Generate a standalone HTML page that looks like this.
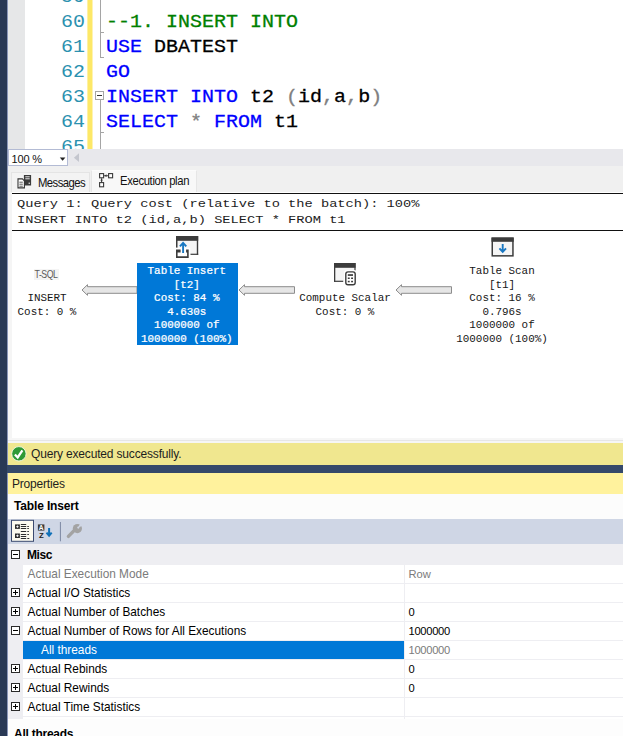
<!DOCTYPE html>
<html><head><meta charset="utf-8"><title>SSMS</title>
<style>
html,body{margin:0;padding:0;}
body{width:623px;height:736px;position:relative;overflow:hidden;background:#fff;font-family:"Liberation Sans",sans-serif;}
.abs{position:absolute;}
#leftbar{left:0;top:0;width:7px;height:736px;background:#293955;border-right:1px solid #8a96b8;}
/* editor */
#editor{left:8px;top:0;width:615px;height:149px;background:#fff;overflow:hidden;}
#margin{left:0;top:0;width:17px;height:149px;background:#e6e7e8;}
#chg{left:79.2px;top:0;width:5.3px;height:149px;background:#fde867;}
.ln,.cl{position:absolute;font-family:"Liberation Mono",monospace;font-size:20px;line-height:25px;height:25px;white-space:pre;transform:scaleY(0.94);transform-origin:0 17.84px;}
.ln{left:40.6px;width:36.5px;text-align:right;color:#2b91af;}
.cl{left:98px;color:#000;-webkit-text-stroke:0.3px;}
.k{color:#0000ff;}.c{color:#008000;}.g{color:#808080;}
.ol{position:absolute;background:#a5a5a5;}
/* strips */
#scroll{left:8px;top:149px;width:615px;height:17px;background:#e8e8ec;}
#zoom{left:8px;top:149px;width:58px;height:15px;background:#fff;border:1px solid #b3bbd4;}
#tabs{left:8px;top:166px;width:615px;height:26px;background:#f0f0f0;}
.tab{position:absolute;font-size:11.3px;color:#111;white-space:nowrap;}
/* plan */
#plan{left:8px;top:192px;width:615px;height:247px;background:#fff;}
.mono{font-family:"Liberation Mono",monospace;white-space:pre;}
.hdr{position:absolute;left:9px;font-size:13.7px;line-height:17px;color:#1c1c1c;transform:scaleY(0.86);transform-origin:0 13.2px;}
.node{position:absolute;top:0;height:0;font-size:10.9px;line-height:13.5px;text-align:center;color:#161616;}
.node span{position:absolute;left:0;width:100%;height:13.5px;transform:scaleY(0.94);transform-origin:50% 9.66px;}
/* status */
#status{left:8px;top:443px;width:615px;height:22px;background:#f0e78f;}
#sep{left:7px;top:465.2px;width:616px;height:7.4px;background:#35496a;}
#ptitle{left:8px;top:473px;width:615px;height:20.5px;background:#fff29d;}
#pobj{left:8px;top:493.5px;width:615px;height:25.5px;background:#fcfcfc;}
#ptool{left:8px;top:519px;width:615px;height:24.5px;background:#cfd6e5;}
#grid{left:8px;top:543.5px;width:615px;height:175px;background:#eeeef2;}
.row{position:absolute;left:15px;width:600px;height:18px;background:#fff;}
.row .n{position:absolute;left:4.6px;top:0;line-height:18px;font-size:11.85px;color:#000;white-space:nowrap;}
.row .v{position:absolute;left:385.5px;top:0;line-height:18px;font-size:11.2px;color:#000;white-space:nowrap;}
.row .d{position:absolute;left:381px;top:0;width:1px;height:19px;background:#eeeef2;}
.pm{position:absolute;left:3px;width:7px;height:7px;border:1px solid #2a2a2a;background:#fff;}
.pm i{position:absolute;left:1px;top:3px;width:5px;height:1px;background:#000;}
.pm b{position:absolute;left:3px;top:1px;width:1px;height:5px;background:#000;}
#desc{left:8px;top:719px;width:615px;height:17px;background:#fdfdfd;}
</style></head><body>
<div id="leftbar" class="abs"></div>

<div id="editor" class="abs">
  <div id="margin" class="abs"></div>
  <svg class="abs" style="left:79px;top:0" width="7" height="149" viewBox="0 0 7 149"><rect x="0.4" y="0" width="5.1" height="149" fill="#fde867"/></svg>
  <div class="ln" style="top:-16px">59</div>
  <div class="ln" style="top:9px">60</div>
  <div class="ln" style="top:34px">61</div>
  <div class="ln" style="top:59px">62</div>
  <div class="ln" style="top:84px">63</div>
  <div class="ln" style="top:109px">64</div>
  <div class="ln" style="top:134px">65</div>
  <div class="cl c" style="top:9px">--1. INSERT INTO</div>
  <div class="cl" style="top:34px"><span class="k">USE</span> DBATEST</div>
  <div class="cl" style="top:59px"><span class="k">GO</span></div>
  <div class="cl" style="top:84px"><span class="k">INSERT INTO</span> t2 <span class="g">(</span>id<span class="g">,</span>a<span class="g">,</span>b<span class="g">)</span></div>
  <div class="cl" style="top:109px"><span class="k">SELECT</span> <span class="g">*</span> <span class="k">FROM</span> t1</div>
  <!-- outlining -->
  <div class="ol" style="left:92px;top:0;width:1px;height:58px"></div>
  <div class="ol" style="left:92px;top:32px;width:4px;height:1px"></div>
  <div class="ol" style="left:92px;top:57px;width:4px;height:1px"></div>
  <div class="ol" style="left:92px;top:100px;width:1px;height:49px"></div>
  <div class="ol" style="left:92px;top:132px;width:4px;height:1px"></div>
  <div class="abs" style="left:87px;top:91px;width:7px;height:7px;border:1px solid #a5a5a5;background:#fff"><div class="abs" style="left:1px;top:3px;width:5px;height:1px;background:#333"></div></div>
</div>

<div id="scroll" class="abs"></div>
<div id="zoom" class="abs"><span class="abs" style="left:2.5px;top:1.5px;font-size:11px;line-height:14px;color:#111;white-space:nowrap;letter-spacing:-0.15px">100 %</span>
  <svg class="abs" style="left:50px;top:7px" width="8" height="5" viewBox="0 0 8 5"><path d="M0.8 0.5h5.6l-2.8 3.3z" fill="#222"/></svg></div>
<svg class="abs" style="left:73px;top:153px" width="7" height="10" viewBox="0 0 7 10"><path d="M6 0.3v8.8L0.9 4.7z" fill="#c4c6ce"/></svg>

<div id="tabs" class="abs">
  <div class="abs" style="left:3px;top:6px;width:79px;height:20px;background:#f3f3f3;border:1px solid #e4e4e4;border-bottom:none;box-sizing:border-box"></div>
  <div class="abs" style="left:82.5px;top:4px;width:106.5px;height:21.5px;background:#f8f8f8;border:1px solid #e6e6e6;border-top-color:#fbfbfb;border-bottom:none;box-sizing:border-box"></div>
  <svg class="abs" style="left:9px;top:8px" width="16" height="16" viewBox="0 0 16 16">
    <rect x="6.9" y="1" width="7.2" height="10.5" fill="#3a3a3a"/>
    <path d="M8.3 2.8h4.4M8.3 4.8h4.4" stroke="#e8e8e8" stroke-width="1"/>
    <rect x="11.6" y="8.6" width="1.3" height="1.3" fill="#e8e8e8"/>
    <path d="M1 4.9h4.4l2 2v7H1z" fill="#fff" stroke="#333" stroke-width="1.1"/>
    <path d="M2.4 8.2h3.4M2.4 10.2h3.4M2.4 12.2h3.4" stroke="#444" stroke-width="0.9"/>
  </svg>
  <span class="tab" style="left:30px;top:9.6px;line-height:14px;font-size:12.4px;letter-spacing:-0.6px;transform:scaleX(0.91);transform-origin:0 0">Messages</span>
  <svg class="abs" style="left:91px;top:7px" width="15" height="15" viewBox="0 0 15 15">
    <rect x="0.6" y="0.6" width="4" height="4.2" fill="#fff" stroke="#3a3a3a" stroke-width="1.1"/>
    <rect x="9.6" y="0.6" width="4" height="4.2" fill="#fff" stroke="#3a3a3a" stroke-width="1.1"/>
    <rect x="0.6" y="9.6" width="4" height="4.2" fill="#fff" stroke="#3a3a3a" stroke-width="1.1"/>
    <path d="M2.6 5.3v3.8M5.1 2.7h4" stroke="#3a3a3a" stroke-width="1.1"/>
    <path d="M5.6 2.7l1.9-1.4v2.8z M2.6 5.8l-1.3 1.7h2.6z" fill="#3a3a3a"/>
  </svg>
  <span class="tab" style="left:111.7px;top:7.6px;line-height:14px;font-size:12.4px;letter-spacing:-0.38px;transform:scaleX(0.91);transform-origin:0 0">Execution plan</span>
</div>

<div id="plan" class="abs">
  <div class="abs" style="left:0;top:0;width:4px;height:247px;background:#f5f5f5"></div>
  <div class="abs" style="left:4px;top:0.8px;width:611px;height:1.25px;background:#111"></div>
  <div class="abs" style="left:4px;top:37.8px;width:611px;height:1.25px;background:#111"></div>
  <div class="hdr mono" style="top:2.5px">Query 1: Query cost (relative to the batch): 100%</div>
  <div class="hdr mono" style="top:19.3px">INSERT INTO t2 (id,a,b) SELECT * FROM t1</div>

  <!-- T-SQL node -->
  <div class="abs" style="left:26px;top:76.7px;width:25px;height:11.3px;background:#f4f4f4"></div>
  <div class="abs" style="left:17.8px;top:76px;width:40px;text-align:center;font-size:10.7px;line-height:13px;color:#5a5a5a;letter-spacing:-0.6px;white-space:nowrap;transform:scaleX(0.82);transform-origin:50% 50%">T-SQL</div>
  <div class="node mono" style="left:-1px;width:80px"><span style="top:100.14px">INSERT</span><span style="top:114.14px">Cost: 0 %</span></div>

  <!-- arrows -->
  <svg class="abs" style="left:72px;top:90px" width="60" height="16" viewBox="0 0 60 16"><path d="M2 8L7.5 2.7V4.7H57V11.3H7.5V13.3Z" fill="#e6e6e6" stroke="#8c8c8c" stroke-width="1"/></svg>
  <svg class="abs" style="left:229px;top:90px" width="60" height="16" viewBox="0 0 60 16"><path d="M2 8L7.5 2.7V4.7H57.5V11.3H7.5V13.3Z" fill="#e6e6e6" stroke="#8c8c8c" stroke-width="1"/></svg>
  <svg class="abs" style="left:386px;top:90px" width="60" height="16" viewBox="0 0 60 16"><path d="M2 8L7.5 2.7V4.7H57.5V11.3H7.5V13.3Z" fill="#e6e6e6" stroke="#8c8c8c" stroke-width="1"/></svg>

  <!-- Table Insert -->
  <svg class="abs" style="left:168.1px;top:43.9px" width="24" height="23" viewBox="0 0 24 23">
    <rect x="0.5" y="0.5" width="21.2" height="17.9" fill="#f5f5f5"/>
    <rect x="0" y="0" width="22.2" height="4.8" fill="#3c3c3c"/>
    <rect x="0" y="0" width="1.5" height="12" fill="#3c3c3c"/>
    <rect x="20.8" y="0" width="1.4" height="18.9" fill="#3c3c3c"/>
    <rect x="14.4" y="17.7" width="7.8" height="1.2" fill="#3c3c3c"/>
    <rect x="-1" y="11.6" width="15.2" height="11.4" fill="#fff"/>
    <path d="M0 13.6h4.6v2.8h-3v3.9h9.5v-3.9h-1v-2.8h2.6v8.3h-12.7z" fill="#3c3c3c"/>
    <path d="M7.1 17V7.4M3.9 10.4L7.1 7L10.3 10.4" fill="none" stroke="#1a78c2" stroke-width="1.9"/>
  </svg>
  <div class="abs" style="left:129px;top:71px;width:101px;height:82px;background:#0078d7"></div>
  <div class="node mono" style="left:128.3px;width:101px;color:#fff;-webkit-text-stroke:0.25px #fff"><span style="top:73.14px">Table Insert</span><span style="top:87.14px">[t2]</span><span style="top:100.14px">Cost: 84 %</span><span style="top:114.14px">4.630s</span><span style="top:127.14px">1000000 of</span><span style="top:140.64px">1000000 (100%)</span></div>

  <!-- Compute Scalar -->
  <svg class="abs" style="left:326.1px;top:70.9px" width="24" height="24" viewBox="0 0 24 24">
    <rect x="0.5" y="0.5" width="20.6" height="17.9" fill="#f5f5f5"/>
    <rect x="0" y="0" width="21.6" height="4.8" fill="#3c3c3c"/>
    <rect x="0" y="0" width="1.3" height="18.9" fill="#3c3c3c"/>
    <rect x="20.4" y="0" width="1.2" height="8" fill="#3c3c3c"/>
    <rect x="0" y="17.7" width="9.2" height="1.2" fill="#3c3c3c"/>
    <rect x="10" y="7.1" width="13" height="16.2" rx="3" fill="#fff"/>
    <rect x="11.8" y="8.9" width="9.4" height="12.8" rx="2.2" fill="#fff" stroke="#3c3c3c" stroke-width="1.4"/>
    <rect x="13.8" y="11.2" width="5.2" height="1.7" fill="#3c3c3c"/>
    <rect x="13.8" y="14.5" width="1.9" height="1.5" fill="#3c3c3c"/><rect x="17.1" y="14.5" width="1.9" height="1.5" fill="#3c3c3c"/>
    <rect x="13.8" y="17.8" width="1.9" height="1.5" fill="#3c3c3c"/><rect x="17.1" y="17.8" width="1.9" height="1.5" fill="#3c3c3c"/>
  </svg>
  <div class="node mono" style="left:287px;width:100px"><span style="top:100.14px">Compute Scalar</span><span style="top:114.14px">Cost: 0 %</span></div>

  <!-- Table Scan -->
  <svg class="abs" style="left:483px;top:45px" width="24" height="21" viewBox="-0.5 -0.5 24 21">
    <rect x="0.75" y="0.75" width="20.7" height="17.6" fill="#f5f5f5" stroke="#3c3c3c" stroke-width="1.5"/>
    <rect x="0" y="0" width="22.2" height="4.3" fill="#3c3c3c"/>
    <path d="M11.2 6.4V14.2M7.9 10.8L11.2 14.4L14.5 10.8" fill="none" stroke="#1a78c2" stroke-width="1.9"/>
  </svg>
  <div class="node mono" style="left:444px;width:100px"><span style="top:73.14px">Table Scan</span><span style="top:87.14px">[t1]</span><span style="top:100.14px">Cost: 16 %</span><span style="top:114.14px">0.796s</span><span style="top:127.14px">1000000 of</span><span style="top:140.64px">1000000 (100%)</span></div>
</div>
<div class="abs" style="left:8px;top:438px;width:615px;height:5px;background:#f6f6f6"></div><div class="abs" style="left:8px;top:440.3px;width:615px;height:1.2px;background:#e6e6e6"></div>

<div id="status" class="abs">
  <svg class="abs" style="left:3px;top:3px" width="16" height="16" viewBox="0 0 16 16"><circle cx="7.9" cy="7.8" r="7.2" fill="#2f9a35" stroke="#fbfbe8" stroke-width="0.9"/><path d="M3.9 8.4L6.7 11.5L11.4 4.4" fill="none" stroke="#fff" stroke-width="2.3"/></svg>
  <span class="abs" style="left:23px;top:3px;font-size:12px;line-height:16px;color:#1e1e1e;white-space:nowrap;letter-spacing:-0.17px">Query executed successfully.</span>
</div>
<div id="sep" class="abs"></div>
<div id="ptitle" class="abs"><span class="abs" style="left:4px;top:2.5px;font-size:12px;line-height:16px;color:#1e1e1e;letter-spacing:-0.2px">Properties</span></div>
<div id="pobj" class="abs"><span class="abs" style="left:6px;top:4px;font-size:12px;line-height:16px;color:#000;font-weight:bold;letter-spacing:-0.15px;white-space:nowrap">Table Insert</span></div>
<div id="ptool" class="abs">
  <svg class="abs" style="left:0;top:0" width="100" height="25" viewBox="0 0 100 25">
    <rect x="3.5" y="1.3" width="22" height="21" fill="#fdfbf0" stroke="#3b4a70" stroke-width="1"/>
    <rect x="7" y="5.4" width="4.9" height="4.5" fill="#2e2e2e"/><rect x="7" y="14.5" width="4.9" height="4.5" fill="#2e2e2e"/>
    <path d="M8.2 7.65h2.5M9.45 6.5v2.3M8.2 16.75h2.5M9.45 15.6v2.3" stroke="#fff" stroke-width="0.9"/>
    <path d="M12.8 5.5h5.4M12.8 7.5h5.4M12.8 9.5h5.4M12.8 12.5h5.4M12.8 15.5h5.4M12.8 17.5h5.4M12.8 19.5h5.4" stroke="#2e2e2e" stroke-width="1.1"/>
    <path d="M19.3 7.5h1.6M19.3 9.5h1.6M19.3 12.5h1.6M19.3 15.5h1.6M19.3 19.5h2" stroke="#2e2e2e" stroke-width="1.1"/>
    <rect x="29.9" y="5.4" width="6.5" height="6.2" fill="#3c3c3c"/>
    <text x="33.15" y="11" font-family="Liberation Sans, sans-serif" font-size="6.6" font-weight="bold" fill="#fff" text-anchor="middle">A</text>
    <text x="33.4" y="18.9" font-family="Liberation Sans, sans-serif" font-size="7.8" font-weight="bold" fill="#222" text-anchor="middle">Z</text>
    <path d="M41.1 8.9V16.6M38.5 13.6L41.1 16.6L43.7 13.6" fill="none" stroke="#0f70b8" stroke-width="2"/>
    <rect x="51.9" y="3" width="1" height="19.3" fill="#7c88a2"/>
    <path d="M60.4 17.4L67 10.6" stroke="#a3a3a3" stroke-width="3.4" stroke-linecap="round"/>
    <circle cx="69.4" cy="9.6" r="4.6" fill="#a3a3a3"/>
    <path d="M70 8.8L72.3 4.2L74.8 6.4Z" fill="#cfd6e5"/>
    <circle cx="70.3" cy="8.6" r="1.1" fill="#cfd6e5"/>
  </svg>
</div>
<div id="grid" class="abs">
  <div class="pm" style="top:6.5px"><i></i></div>
  <span class="abs" style="left:19px;top:3px;font-size:12px;line-height:16px;font-weight:bold;letter-spacing:-0.4px;color:#000">Misc</span>
  <div class="row" style="top:21px"><span class="n" style="color:#7b7b7b">Actual Execution Mode</span><span class="v" style="color:#7b7b7b">Row</span><div class="d"></div></div>
  <div class="row" style="top:40px"><span class="n">Actual I/O Statistics</span><div class="d"></div></div>
  <div class="row" style="top:59px"><span class="n">Actual Number of Batches</span><span class="v">0</span><div class="d"></div></div>
  <div class="row" style="top:78px"><span class="n">Actual Number of Rows for All Executions</span><span class="v" style="letter-spacing:-0.3px">1000000</span><div class="d"></div></div>
  <div class="row" style="top:97px"><div class="abs" style="left:0;top:0;width:381px;height:18px;background:#0078d7"></div><span class="n" style="left:18px;color:#fff">All threads</span><span class="v" style="color:#7b7b7b;letter-spacing:-0.3px">1000000</span><div class="d"></div></div>
  <div class="row" style="top:116px"><span class="n">Actual Rebinds</span><span class="v">0</span><div class="d"></div></div>
  <div class="row" style="top:135px"><span class="n">Actual Rewinds</span><span class="v">0</span><div class="d"></div></div>
  <div class="row" style="top:154px"><span class="n">Actual Time Statistics</span><div class="d"></div></div>
  <div class="row" style="top:173px;height:2px"><div class="d" style="height:2px"></div></div>
  <div class="pm" style="top:44.1px"><i></i><b></b></div>
  <div class="pm" style="top:63.1px"><i></i><b></b></div>
  <div class="pm" style="top:82.1px"><i></i></div>
  <div class="pm" style="top:120.1px"><i></i><b></b></div>
  <div class="pm" style="top:139.1px"><i></i><b></b></div>
  <div class="pm" style="top:158.1px"><i></i><b></b></div>
</div>
<div id="desc" class="abs"><span class="abs" style="left:6px;top:6.5px;font-size:12px;line-height:16px;font-weight:bold;letter-spacing:-0.25px;color:#000;white-space:nowrap">All threads</span></div>
</body></html>
